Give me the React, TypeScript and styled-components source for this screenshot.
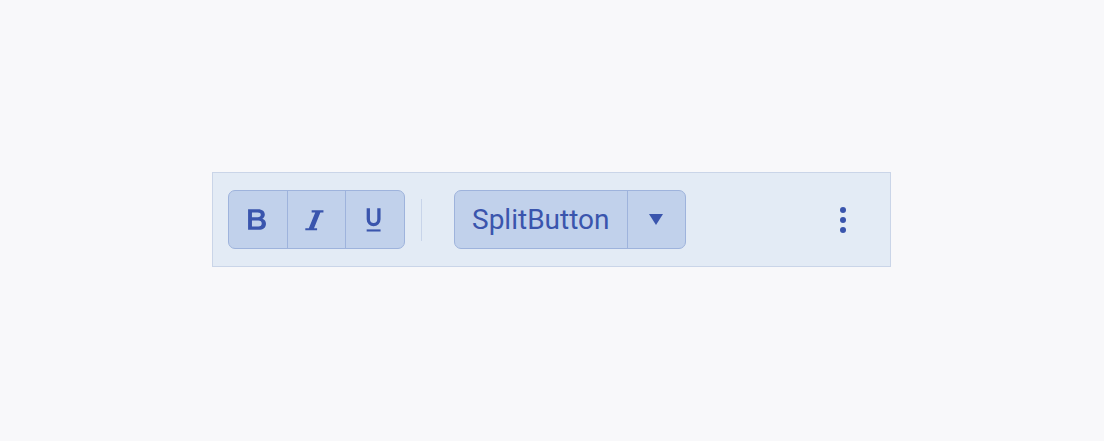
import React from "react";
import styled, { createGlobalStyle } from "styled-components";

const Global = createGlobalStyle`
  html, body { margin: 0; padding: 0; background: #f8f8fa; }
  body { font-family: Roboto, "Liberation Sans", sans-serif; }
  * { box-sizing: border-box; }
`;

const Page = styled.div`
  min-height: 441px;
  padding: 172px 0 0 212px;
  display: flex;
  align-items: flex-start;
`;

const Toolbar = styled.div`
  width: 679px;
  height: 95px;
  background: #e3ebf5;
  border: 1px solid #cad5e8;
  padding: 0 15px;
  display: flex;
  align-items: center;
  gap: 16px;
`;

const Group = styled.div<{ $w: number }>`
  display: flex;
  height: 59px;
  width: ${(p) => p.$w}px;
  border: 1px solid #9eb3dc;
  border-radius: 7px;
  background: #c1d1eb;
  overflow: hidden;
`;

const ToolButton = styled.button<{ $divider?: boolean; $w?: number }>`
  flex: ${(p) => (p.$w ? `0 0 ${p.$w}px` : "1 1 0")};
  height: 100%;
  margin: 0;
  padding: 0;
  border: none;
  border-left: ${(p) => (p.$divider ? "1px solid #9eb3dc" : "none")};
  background: transparent;
  color: #3a55ad;
  display: flex;
  align-items: center;
  justify-content: center;
  cursor: pointer;
`;

const Label = styled.span`
  font-family: Roboto, "Liberation Sans", sans-serif;
  font-size: 28px;
  line-height: 1;
  color: #3a55ad;
  padding: 0 17px;
  white-space: nowrap;
`;

const MainPart = styled(ToolButton)`
  flex: 1 1 auto;
  justify-content: flex-start;
`;

const Separator = styled.div`
  width: 1px;
  height: 42px;
  background: #c8d4e9;
  margin-right: 16px;
`;

const Kebab = styled.button`
  margin-left: auto;
  width: 65px;
  height: 59px;
  border: none;
  background: transparent;
  padding: 0;
  display: flex;
  align-items: center;
  justify-content: center;
  color: #3a55ad;
  cursor: pointer;
`;

const Caret = styled.svg`
  margin-right: 2px;
`;

const ICON = 33;
const VB = "-1.7 0 28 28";

const BoldIcon = () => (
  <svg width={ICON} height={ICON} viewBox={VB} fill="currentColor">
    <path
      fillRule="evenodd"
      d="M4.3 5.2 H12.8 C16.5 5.2 18.5 7.1 18.5 9.8 C18.5 11.4 17.7 12.6 16.4 13.3 C18.3 13.9 19.5 15.4 19.5 17.5 C19.5 20.7 17.1 22.8 13.3 22.8 H4.3 Z M7.6 8 H12.5 C14.2 8 15.1 8.7 15.1 10 C15.1 11.3 14.2 12 12.5 12 H7.6 Z M7.6 14.8 H13 C14.9 14.8 15.9 15.7 15.9 17.4 C15.9 19.1 14.9 20 13 20 H7.6 Z"
    />
  </svg>
);

const ItalicIcon = () => (
  <svg width={ICON} height={ICON} viewBox={VB} fill="currentColor">
    <path d="M8.2 6.2 H18.2 V8 H15.6 L10.2 21.4 H12.8 V23.2 H2.8 V21.4 H5.8 L11.2 8 H8.2 Z" />
  </svg>
);

const UnderlineIcon = () => (
  <svg width={ICON} height={ICON} viewBox={VB}>
    <path
      d="M6.2 4.5 V13.8 A4.5 4.5 0 0 0 15.2 13.8 V4.5"
      fill="none"
      stroke="currentColor"
      strokeWidth="2.8"
    />
    <rect x="4.8" y="22.4" width="11.8" height="1.8" fill="currentColor" />
  </svg>
);

const CaretDown = () => (
  <Caret width="14" height="11" viewBox="0 0 14 11" fill="currentColor">
    <path d="M0 0 H14 L7 11 Z" />
  </Caret>
);

const MoreVert = () => (
  <svg width="8" height="28" viewBox="0 0 8 28" fill="currentColor">
    <circle cx="4" cy="4" r="3" />
    <circle cx="4" cy="14" r="3" />
    <circle cx="4" cy="24" r="3" />
  </svg>
);

export default function App() {
  return (
    <>
      <Global />
      <Page>
        <Toolbar>
          <Group $w={177}>
            <ToolButton aria-label="Bold">
              <BoldIcon />
            </ToolButton>
            <ToolButton $divider aria-label="Italic">
              <ItalicIcon />
            </ToolButton>
            <ToolButton $divider aria-label="Underline">
              <UnderlineIcon />
            </ToolButton>
          </Group>
          <Separator />
          <Group $w={232}>
            <MainPart>
              <Label>SplitButton</Label>
            </MainPart>
            <ToolButton $divider $w={58} aria-label="More options">
              <CaretDown />
            </ToolButton>
          </Group>
          <Kebab aria-label="More">
            <MoreVert />
          </Kebab>
        </Toolbar>
      </Page>
    </>
  );
}
